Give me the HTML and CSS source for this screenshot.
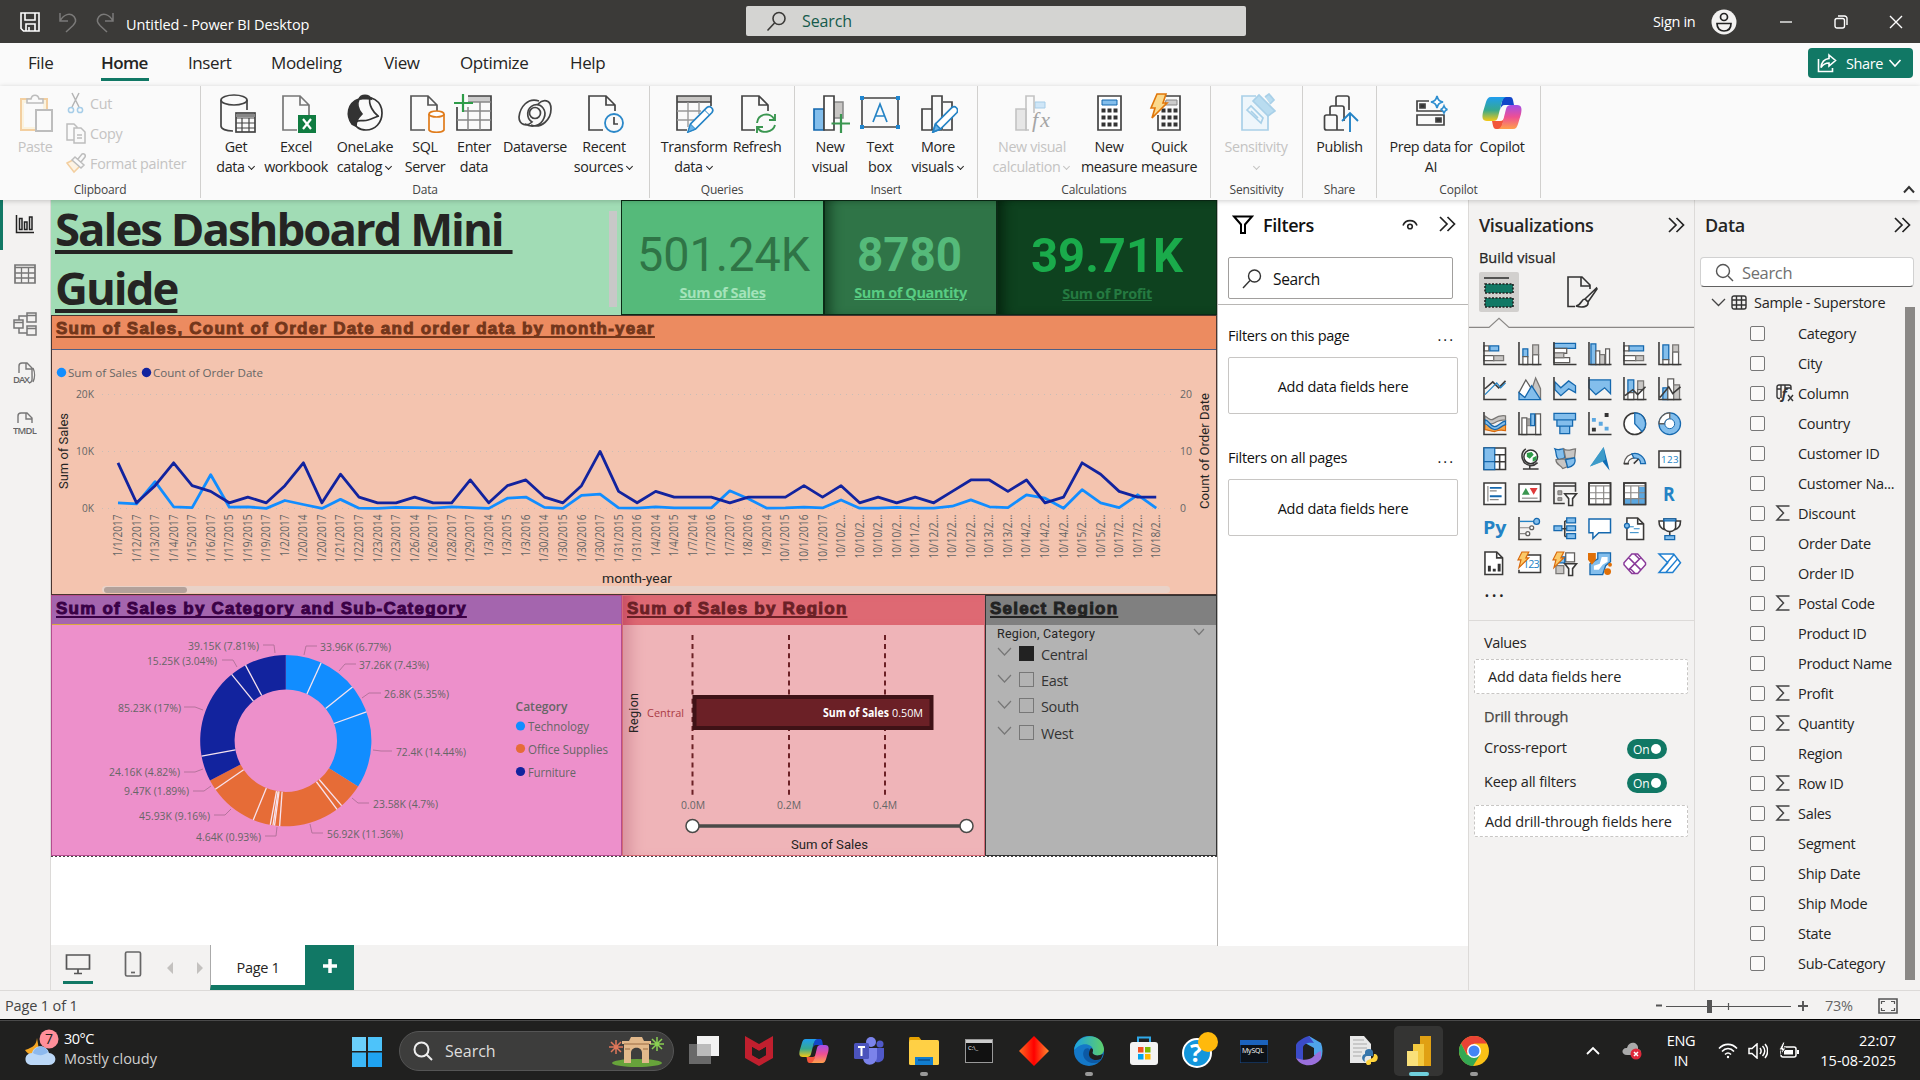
FILE: index.html
```html
<!DOCTYPE html>
<html lang="en">
<head>
<meta charset="utf-8">
<title>Untitled - Power BI Desktop</title>
<link rel="stylesheet" href="styles.css">
</head>
<body>
<div class="app">

<header class="titlebar">
  <div class="tb-left">
    <svg width="22" height="22" viewBox="0 0 22 22" fill="none" stroke="#fff" stroke-width="1.6"><path d="M2 2h18v18H4.500L2 17.500zM6 2v7h10V2M7 20v-7h9v7M10 20v-4"/></svg>
    <svg width="20" height="22" viewBox="0 0 20 22" fill="none" stroke="#7b7a79" stroke-width="1.500"><path d="M2 2v8h8M2 10C6 3 12 1.500 16 5.500c3 4 1.500 6-1 9L8 21"/></svg>
    <svg width="20" height="22" viewBox="0 0 20 22" fill="none" stroke="#7b7a79" stroke-width="1.500"><path d="M18 2v8h-8M18 10C14 3 8 1.500 4 5.500c-3 4-1.500 6 1 9L12 21"/></svg>
    <span class="tb-title">Untitled - Power BI Desktop</span>
  </div>
  <div class="tb-search">
    <svg width="21" height="21" viewBox="0 0 21 21" fill="none" stroke="#3b3a38" stroke-width="1.600"><circle cx="13" cy="7.500" r="6"/><path d="M8.500 12 1.500 19.500"/></svg>
    <span>Search</span>
  </div>
  <div class="tb-right">
    <span>Sign in</span>
    <svg class="avatar" width="26" height="26" viewBox="0 0 26 26"><circle cx="13" cy="13" r="12.500" fill="#f3f2f1"/><g fill="none" stroke="#222" stroke-width="1.700"><circle cx="13" cy="8" r="3.500"/><path d="M6 14.500h14c0 5-3 7.500-7 7.500s-7-2.500-7-7.500z"/></g></svg>
    <svg class="win" width="14" height="14" viewBox="0 0 14 14" stroke="#fff" stroke-width="1.300"><path d="M1 7h12"/></svg>
    <svg class="win" width="14" height="14" viewBox="0 0 14 14" fill="none" stroke="#fff" stroke-width="1.400"><rect x="1" y="3.500" width="9.500" height="9.500" rx="2"/><path d="M4 1h6.500a2.500 2.500 0 0 1 2.500 2.500V10"/></svg>
    <svg class="win" width="14" height="14" viewBox="0 0 14 14" stroke="#fff" stroke-width="1.400"><path d="M1 1l12 12M13 1 1 13"/></svg>
  </div>
</header>

<nav class="tabs">
  <span class="tab t-file">File</span><span class="tab t-home active">Home</span><span class="tab t-insert">Insert</span><span class="tab t-model">Modeling</span><span class="tab t-view">View</span><span class="tab t-opt">Optimize</span><span class="tab t-help">Help</span>
  <div class="share-btn">
    <svg width="20" height="20" viewBox="0 0 20 20" fill="none" stroke="#fff" stroke-width="1.600"><path d="M1.500 6v12.500h14V15"/><path d="M12 2l6.500 5.500L12 13V10c-4 0-6 1.500-8 4.500 .5-5 3-8.500 8-9z"/></svg>
    <span>Share</span>
    <svg width="14" height="10" viewBox="0 0 14 10" fill="none" stroke="#fff" stroke-width="1.600"><path d="M1.500 2 7 8l5.500-6"/></svg>
  </div>
</nav>

<section class="ribbon">
  <div class="group g-clip">
    <div class="group-body">
      <div class="rb w50 dim"><svg class="ric" viewBox="0 0 40 40" fill="none"><path d="M6 6h26v31H6z" fill="#fbf3df" stroke="#f3cfa0" stroke-width="2"/><path d="M9 10h19v24H9z" fill="#fafafa"/><path d="M12 10V6h4c1-5 7-5 8 0h4v4z" fill="#fafafa" stroke="#bdbdbd" stroke-width="1.600"/><path d="M21 17h16v21H21z" fill="#fafafa" stroke="#bdbdbd" stroke-width="2"/></svg><span>Paste</span></div>
      <div class="clip-list dim">
        <div><svg width="20" height="22" viewBox="0 0 20 22" fill="none" stroke="#b5b5b5" stroke-width="1.500"><path d="M6 1l7 14M13 1 6 15"/><circle cx="5" cy="18" r="2.600" stroke="#a6cde8"/><circle cx="14" cy="18" r="2.600" stroke="#a6cde8"/></svg><span>Cut</span></div>
        <div><svg width="20" height="22" viewBox="0 0 20 22" fill="#fafafa" stroke="#bdbdbd" stroke-width="1.500"><path d="M1 2h7l3 3v13H1z"/><path d="M8 6h7l4 4v11H8z"/><path d="M11 13h5M11 16h5"/></svg><span>Copy</span></div>
        <div><svg width="20" height="22" viewBox="0 0 20 22" fill="none" stroke-width="1.500"><path d="M1 11l8-4 6 6-7 7z" fill="#fdf3e4" stroke="#f3cfa0"/><path d="M6 8l3-3 9 8-3 3zM12 7l4-5c2-1 4 1 3 3l-4 5" fill="#fafafa" stroke="#bdbdbd"/></svg><span>Format painter</span></div>
      </div>
    </div>
    <div class="group-label">Clipboard</div>
  </div>

  <div class="group g-data">
    <div class="group-body">
      <div class="rb w56"><svg class="ric" viewBox="0 0 40 40" fill="none" stroke="#444" stroke-width="1.700"><ellipse cx="18" cy="7" rx="13" ry="5"/><path d="M5 7v26c0 3 5 5 12 5M31 7v10"/><rect x="20" y="20" width="19" height="19" fill="#fafafa"/><path d="M20 22.500h19" stroke="#888" stroke-width="3"/><path d="M20 25h19M20 30h19M20 35h19M26 25v14M33 25v14" stroke-width="1.200"/></svg><span>Get<br>data<i class="cv"></i></span></div>
      <div class="rb w64"><svg class="ric" viewBox="0 0 40 40" fill="none"><path d="M21 37H7V3h17l9 9v10M24 3v9h9" stroke="#777" stroke-width="1.700"/><rect x="22" y="22" width="18" height="18" fill="#107c41"/><path d="M27 26l8 10M35 26l-8 10" stroke="#fff" stroke-width="2.200"/></svg><span>Excel<br>workbook</span></div>
      <div class="rb w74"><svg class="ric" viewBox="0 0 40 40" fill="none" stroke="#333" stroke-width="1.700"><path d="M14 6c2-5 10-5 12 0-5-1-8 0-12 0zM14 6C2 10 1 23 7 31l4 2c0-7 4-10 6-12-5-6-5-11-3-15z" fill="#333"/><path d="M14 6c12-5 23 2 23 14 0 10-7 17-16 17-7 0-12-4-10-8 3-3 7 0 12-2 4-1 7-3 11-4M25 5c-2 7 4 15 8 18"/></svg><span>OneLake<br>catalog<i class="cv"></i></span></div>
      <div class="rb w46"><svg class="ric" viewBox="0 0 40 40" fill="none"><path d="M20 37H6V3h17l9 9v6M23 3v9h9" stroke="#555" stroke-width="1.700"/><path d="M24 21v16c2 3 13 3 15 0V21" fill="#fafafa" stroke="#e07b1a" stroke-width="1.700"/><ellipse cx="31.500" cy="21" rx="7.500" ry="3" fill="#fff" stroke="#e07b1a" stroke-width="1.700"/></svg><span>SQL<br>Server</span></div>
      <div class="rb w52"><svg class="ric" viewBox="0 0 40 40" fill="none"><path d="M14 3h23v6H14z" fill="#ccc"/><path d="M14 3h23v34H3V14" stroke="#444" stroke-width="1.700"/><path d="M14 9h23M10 18h27M3 27h34M14 14v23M26 9v28" stroke="#888" stroke-width="1.500"/><path d="M9 1v18M0 10h19" stroke="#2e9c48" stroke-width="2.200"/></svg><span>Enter<br>data</span></div>
      <div class="rb w70"><svg class="ric" viewBox="0 0 40 40" fill="none" stroke="#444" stroke-width="1.700"><path d="M24 8C13 4 5 14 4 24c0 8 8 10 13 5-6-4-6-14 2-17 8-2 13 6 10 13-3 8-12 10-19 6M16 32c11 4 20-6 20-16 0-10-8-10-13-5"/><circle cx="20" cy="20" r="5.500"/></svg><span>Dataverse</span></div>
      <div class="rb w68"><svg class="ric" viewBox="0 0 40 40" fill="none"><path d="M19 37H5V3h17l9 9v6M22 3v9h9" stroke="#444" stroke-width="1.700"/><circle cx="30" cy="30" r="9" fill="#fafafa" stroke="#2b88c9" stroke-width="1.800"/><path d="M30 24v7h4" stroke="#444" stroke-width="1.700"/></svg><span>Recent<br>sources<i class="cv"></i></span></div>
    </div>
    <div class="group-label">Data</div>
  </div>

  <div class="group g-query">
    <div class="group-body">
      <div class="rb w66"><svg class="ric" viewBox="0 0 40 40" fill="none"><path d="M3 3h34v6H3z" fill="#c8c6c4"/><path d="M13 37H3V3h34v10M3 9h34" stroke="#444" stroke-width="1.700"/><path d="M3 18h24M3 27h17M14 9v25M25 9v12" stroke="#999" stroke-width="1.400"/><path d="M14 39l2.500-8L33 14.500c3-2.500 7.500 1.500 5 5L21.500 36z" fill="#fff" stroke="#2483c5" stroke-width="1.700"/><path d="M14 39l2.500-8 5 5z" fill="#6cb4e8" stroke="#2483c5"/><path d="M30.500 17l5 5" stroke="#2483c5"/></svg><span>Transform<br>data<i class="cv"></i></span></div>
      <div class="rb w60"><svg class="ric" viewBox="0 0 40 40" fill="none"><path d="M18 37H5V3h17l9 9v6M22 3v9h9" stroke="#444" stroke-width="1.700"/><path d="M20 30c1-10 14-11 17-4M38 21v6h-6M38 32c-2 8-14 9-17 3M20 40v-6h6" stroke="#3a9650" stroke-width="1.900"/></svg><span>Refresh</span></div>
    </div>
    <div class="group-label">Queries</div>
  </div>

  <div class="group g-insert">
    <div class="group-body">
      <div class="rb w52"><svg class="ric" viewBox="0 0 40 40" fill="none"><path d="M22 9h11v16H22z" fill="#c8c6c4" stroke="#888" stroke-width="1.500"/><path d="M4 16h10v21H4z" fill="#83beec" stroke="#1568ae" stroke-width="1.700"/><path d="M14 3h10v34H14z" fill="#fff" stroke="#444" stroke-width="1.700"/><path d="M31 21v19M21.500 30.500H40" stroke="#3a9650" stroke-width="2.200"/></svg><span>New<br>visual</span></div>
      <div class="rb w48"><svg class="ric" viewBox="0 0 40 40" fill="none"><path d="M2 5h36v29H2z" stroke="#444" stroke-width="1.600"/><path d="M0 3h4v4H0zM36 3h4v4h-4zM0 32h4v4H0zM36 32h4v4h-4z" fill="#1f86d0"/><path d="M13 29l7-18 7 18M15.500 23h9" stroke="#2483c5" stroke-width="1.700"/></svg><span>Text<br>box</span></div>
      <div class="rb w68"><svg class="ric" viewBox="0 0 40 40" fill="none" stroke="#444" stroke-width="1.700"><path d="M25 9h9v28H25M4 16h10v21H4zM14 3h10v34H14z"/><path d="M15 39l2.500-8L34 14.500c3-2.500 7 1.500 5 5L22.500 36z" fill="#fff" stroke="#2483c5"/><path d="M15 39l2.500-8 5 5z" fill="#6cb4e8" stroke="#2483c5"/></svg><span>More<br>visuals<i class="cv"></i></span></div>
    </div>
    <div class="group-label">Insert</div>
  </div>

  <div class="group g-calc">
    <div class="group-body">
      <div class="rb w86 dim"><svg class="ric" viewBox="0 0 40 40" fill="none"><path d="M23 9h10v6H23z" fill="#cfe6f7" stroke="#a6cde8"/><path d="M4 16h10v21H4z" fill="#e6e6e6" stroke="#c3c3c3" stroke-width="1.600"/><path d="M22 20V3h-8v34h3" stroke="#c3c3c3" stroke-width="1.600"/><text class="fx" x="20" y="34" textLength="18">fx</text></svg><span>New visual<br>calculation<i class="cv"></i></span></div>
      <div class="rb w68"><svg class="ric" viewBox="0 0 40 40" fill="none"><path d="M9 3h23v34H9z" fill="#fff" stroke="#444" stroke-width="1.700"/><path d="M13 7h15v5H13z" fill="#83beec" stroke="#1568ae"/><path d="M12.500 17.500h16M12.500 24.500h16M12.500 31.500h16" stroke="#333" stroke-width="4" stroke-dasharray="4 2"/></svg><span>New<br>measure</span></div>
      <div class="rb w52"><svg class="ric" viewBox="0 0 40 40" fill="none"><path d="M17 3h14v34H9V22" stroke="#444" stroke-width="1.700"/><path d="M17 7h11v5H16z" fill="#ccc" stroke="#888"/><path d="M12.500 17.500h16M12.500 24.500h16M12.500 31.500h16" stroke="#333" stroke-width="4" stroke-dasharray="4 2"/><path d="M8 1h9l-3 9h4L3 25l3-10H2z" fill="#fbd98c" stroke="#e0760a" stroke-width="1.600"/></svg><span>Quick<br>measure</span></div>
    </div>
    <div class="group-label">Calculations</div>
  </div>

  <div class="group g-sens">
    <div class="group-body">
      <div class="rb w90 dim"><svg class="ric" viewBox="0 0 40 40" fill="none" stroke="#a9d0e8" stroke-width="1.700"><path d="M20 3H6v34h26V22" fill="#eef6fb"/><path d="M17 8l6-6 16 16-7 5zM29 4l4-3 5 6-4 4" fill="#b9dcf0"/><path d="M11 17l4-4 12 12-2 5zM15 18l7 7"/></svg><span>Sensitivity<br><i class="cv solo"></i></span></div>
    </div>
    <div class="group-label">Sensitivity</div>
  </div>

  <div class="group g-share">
    <div class="group-body">
      <div class="rb w74"><svg class="ric" viewBox="0 0 40 40" fill="none" stroke="#444" stroke-width="1.700"><path d="M24 37H6.500a2 2 0 0 1-2-2V24a2 2 0 0 1 2-2H15a2 2 0 0 1 2 2v13M10 22v-7a2 2 0 0 1 2-2h10a2 2 0 0 1 2 2v13M16 13V5a2 2 0 0 1 2-2h9a2 2 0 0 1 2 2v12"/><path d="M30 39V20M22 28l8-8 8 8" stroke="#2483c5" stroke-width="1.900"/></svg><span>Publish</span></div>
    </div>
    <div class="group-label">Share</div>
  </div>

  <div class="group g-cop">
    <div class="group-body">
      <div class="rb w90"><svg class="ric" viewBox="0 0 40 40" fill="none" stroke="#444" stroke-width="1.700"><path d="M18 8H6v10h27v-2M6 22h27v10H6z"/><path d="M9 11h5v4H9zM25 25h5v4h-5z" fill="#333"/><path d="M26 3c1 4 2 5 6 6-4 1-5 2-6 6-1-4-2-5-6-6 4-1 5-2 6-6zM33 13c.7 2 1.200 3 3.500 3.500-2.300.5-2.800 1.500-3.500 3.500-.7-2-1.200-3-3.500-3.500 2.300-.5 2.800-1.500 3.500-3.500z" stroke="#2f8fd0" fill="#fff"/></svg><span>Prep data for<br>AI</span></div>
      <div class="rb w52"><svg class="ric" viewBox="0 0 40 40"><use href="#copilot"/></svg><span>Copilot</span></div>
    </div>
    <div class="group-label">Copilot</div>
  </div>
  <svg class="collapse" width="12" height="9" viewBox="0 0 12 9" fill="none" stroke="#333" stroke-width="2"><path d="M1 7.500 6 2l5 5.500"/></svg>
</section>

<main class="work">
  <aside class="rail">
    <div class="rail-item on"><svg width="20" height="20" viewBox="0 0 20 20" fill="none" stroke="#222" stroke-width="1.500"><path d="M1.500 1v17.500H19"/><path d="M4.500 4.500h2.500v11H4.500zM9.500 8H12v7.500H9.500zM14.500 3H17v12.500h-2.500z"/></svg></div>
    <div class="rail-item"><svg width="22" height="22" viewBox="0 0 22 22" fill="none" stroke="#777" stroke-width="1.300"><path d="M1 2h20v18H1zM1 4.500h20" stroke-width="1.700"/><path d="M1 10h20M1 15h20M7.500 5v15M14.500 5v15"/></svg></div>
    <div class="rail-item"><svg width="24" height="24" viewBox="0 0 24 24" fill="none" stroke="#777" stroke-width="1.500"><path d="M1 8h9v8H1zM14 1h9v9h-9zM14 14h9v9h-9zM1 10.500h9M14 3.500h9M14 16.500h9M6 8V4h8M6 16v5h8"/></svg></div>
    <div class="rail-item"><svg width="24" height="24" viewBox="0 0 24 24" fill="none" stroke="#777" stroke-width="1.400"><path d="M6 11V4c0-2 1-3 3-3h5l5 5v5c0 6 1 9-3 10M13 1v6h6M20 6c2 4 2 10 0 14"/><text class="rt" x="0" y="21" textLength="17">DAX</text></svg></div>
    <div class="rail-item"><svg width="24" height="24" viewBox="0 0 24 24" fill="none" stroke="#777" stroke-width="1.400"><path d="M5 11V4c0-2 1-3 3-3h6l5 5v5M13 1v6h6"/><text class="rt" x="0" y="22" textLength="24">TMDL</text></svg></div>
  </aside>

  <section class="canvas">
    <div class="report">
      <div class="row1">
        <div class="v-title"><h1><u>Sales Dashboard Mini&nbsp;</u><br><u>Guide</u></h1><div class="vs"></div></div>
        <div class="kpi k1"><svg width="202" height="90"><text x="16" y="71" textLength="173" lengthAdjust="spacingAndGlyphs">501.24K</text></svg><u>Sum of Sales</u></div>
        <div class="kpi k2"><svg width="172" height="90"><text x="33" y="71" textLength="105" lengthAdjust="spacingAndGlyphs">8780</text></svg><u>Sum of Quantity</u></div>
        <div class="kpi k3"><svg width="220" height="91"><text x="34" y="72" textLength="152" lengthAdjust="spacingAndGlyphs">39.71K</text></svg><u>Sum of Profit</u></div>
      </div>
      <div class="v-line">
        <div class="vh"><u>Sum of Sales, Count of Order Date and order data by month-year</u></div>
        <svg id="line" width="1164" height="244" viewBox="52 350 1164 244"></svg>
      </div>
      <div class="row3">
        <div class="v-pie">
          <div class="vh"><u>Sum of Sales by Category and Sub-Category</u></div>
          <svg id="donut" width="569" height="229" viewBox="52 625 569 229"></svg>
        </div>
        <div class="v-region">
          <div class="vh"><u>Sum of Sales by Region</u></div>
          <svg width="361" height="230" viewBox="623 625 361 230">
            <g stroke="#6b2025" stroke-width="2" stroke-dasharray="5 4.100"><path d="M692.500 635v160M789 635v160M885 635v160"/></g>
            <rect x="694.500" y="697" width="237" height="31" fill="#6b2026" stroke="#3f1216" stroke-width="4"/>
            <text class="bl b7" x="823" y="716.500" textLength="66" lengthAdjust="spacingAndGlyphs">Sum of Sales</text>
            <text class="bl" x="892" y="716.500" textLength="31" lengthAdjust="spacingAndGlyphs">0.50M</text>
            <text class="ax cen" x="647" y="717" textLength="37" lengthAdjust="spacingAndGlyphs">Central</text>
            <text class="ax" x="681" y="809" textLength="24" lengthAdjust="spacingAndGlyphs">0.0M</text>
            <text class="ax" x="777" y="809" textLength="24" lengthAdjust="spacingAndGlyphs">0.2M</text>
            <text class="ax" x="873" y="809" textLength="24" lengthAdjust="spacingAndGlyphs">0.4M</text>
            <text class="at" x="791" y="849" textLength="77" lengthAdjust="spacingAndGlyphs">Sum of Sales</text>
            <text class="at" transform="translate(638 733) rotate(-90)" textLength="40">Region</text>
            <path d="M692 826h274" stroke="#4a4a48" stroke-width="3.500"/>
            <g fill="#fff" stroke="#4a4a48" stroke-width="1.500"><circle cx="692.500" cy="826" r="6.500"/><circle cx="966.500" cy="826" r="6.500"/></g>
          </svg>
        </div>
        <div class="v-slicer">
          <div class="vh"><u>Select Region</u></div>
          <div class="sl-head"><span>Region, Category</span><svg width="12" height="8" viewBox="0 0 12 8" class="ch"><path d="M1 1l5 5.500L11 1"/></svg></div>
          <div class="sl-row"><svg width="15" height="10" viewBox="0 0 15 10" class="ch"><path d="M1 1l6.500 7L14 1"/></svg><i class="sq full"></i><span>Central</span></div>
          <div class="sl-row"><svg width="15" height="10" viewBox="0 0 15 10" class="ch"><path d="M1 1l6.500 7L14 1"/></svg><i class="sq"></i><span>East</span></div>
          <div class="sl-row"><svg width="15" height="10" viewBox="0 0 15 10" class="ch"><path d="M1 1l6.500 7L14 1"/></svg><i class="sq"></i><span>South</span></div>
          <div class="sl-row"><svg width="15" height="10" viewBox="0 0 15 10" class="ch"><path d="M1 1l6.500 7L14 1"/></svg><i class="sq"></i><span>West</span></div>
        </div>
      </div>
    </div>
    <div class="blank"></div>
    <div class="pages">
      <div class="pg-mon"><svg width="26" height="22" viewBox="0 0 26 22" fill="none" stroke="#555" stroke-width="1.700"><path d="M1.500 2h23v14h-23zM13 16v4M9 20.500h8"/></svg></div>
      <svg class="pg-ph" width="18" height="26" viewBox="0 0 18 26" fill="none" stroke="#666" stroke-width="1.700"><rect x="1.500" y="1" width="15" height="24" rx="1.500"/><path d="M7 21.500h4"/></svg>
      <svg class="pg-ar" width="36" height="12" viewBox="0 0 36 12" fill="#c3c1bf"><path d="M6 0v12L0 6zM30 0v12l6-6z"/></svg>
      <div class="pg-tab">Page 1</div>
      <div class="pg-add"><svg width="14" height="14" viewBox="0 0 14 14" stroke="#fff" stroke-width="3.500"><path d="M7 0v14M0 7h14"/></svg></div>
    </div>
  </section>

  <aside class="filters">
    <div class="f-top">
      <div class="f-head">
        <svg width="22" height="20" viewBox="0 0 22 20" fill="none" stroke="#000" stroke-width="2"><path d="M2 1.500h18l-7 8V18H9V9.500z"/></svg>
        <h2>Filters</h2>
        <svg width="18" height="12" viewBox="0 0 18 12" fill="none" stroke="#222" stroke-width="1.600"><path d="M2 6.500c2.500-6.500 11.500-6.500 14 0"/><circle cx="9" cy="7.500" r="2.300"/></svg>
        <svg class="dbl" width="17" height="16" viewBox="0 0 17 16"><path d="M1 1l7 7-7 7M8.500 1l7 7-7 7"/></svg>
      </div>
      <div class="f-search"><svg width="20" height="20" viewBox="0 0 20 20" fill="none" stroke="#333" stroke-width="1.400"><circle cx="12.500" cy="7" r="6"/><path d="M8 11.500 1 19"/></svg><span>Search</span></div>
    </div>
    <div class="f-sec"><div class="f-lab"><span>Filters on this page</span><b>...</b></div><div class="f-box">Add data fields here</div></div>
    <div class="f-sec"><div class="f-lab"><span>Filters on all pages</span><b>...</b></div><div class="f-box">Add data fields here</div></div>
  </aside>

  <aside class="viz">
    <div class="p-head"><h2>Visualizations</h2><svg class="dbl" width="17" height="16" viewBox="0 0 17 16"><path d="M1 1l7 7-7 7M8.500 1l7 7-7 7"/></svg></div>
    <div class="bv">Build visual</div>
    <div class="modes">
      <div class="mode on"><svg width="32" height="32" viewBox="0 0 32 32"><path d="M1 2h25" stroke="#333" stroke-width="1.600"/><g fill="#117865" stroke="#222" stroke-width="1.600" stroke-dasharray="2 1.500"><path d="M2 8h28v9H2zM2 22h28v9H2z"/></g></svg></div>
      <div class="mode"><svg width="32" height="32" viewBox="0 0 32 32" fill="none" stroke="#333" stroke-width="1.600"><path d="M8 30.500H1V1h14l8 8v4M14 1v9h9"/><path d="M29.500 12L18 23l3 3 9-13zM18 23c-4 0-3 6-9 7 6 2 13 1 12-4z" fill="#f3f2f1"/></svg></div>
    </div>
    <svg class="caret" width="226" height="11" viewBox="0 0 226 11" fill="none" stroke="#8a8886" stroke-width="1.200"><path d="M0 10.400h20l10-9 10 9h186"/></svg>
    <div class="vgrid">
      <svg viewBox="0 0 24 24"><g class="w"><path d="M1 4h5v5H1zM1 14h10v5H1z"/></g><path class="b" d="M7 4h9v5H7z"/><path class="g" d="M11 14h10v5H11z"/><path class="k" d="M1 0v23h23"/></svg>
      <svg viewBox="0 0 24 24"><path class="b" d="M5 7h5v8H5z"/><path class="w" d="M5 15h5v8H5zM15 13h6v10h-6z"/><path class="g" d="M15 3h6v10h-6z"/><path class="k" d="M1 0v23h23"/></svg>
      <svg viewBox="0 0 24 24"><path class="b" d="M1 1.500h22v5H1z"/><path class="w" d="M1 6.500h13v5H1zM1 16h16v5H1z"/><path class="g" d="M1 11h10v5H1z"/><path class="k" d="M1 0v23h23"/></svg>
      <svg viewBox="0 0 24 24"><path class="b" d="M3 2h5v21H3z"/><path class="w" d="M8 9h4v14H8zM18 7h4v16h-4z"/><path class="g" d="M12 13h5v10h-5z"/><path class="k" d="M1 0v23h23"/></svg>
      <svg viewBox="0 0 24 24"><path class="b" d="M6 4h15v5H6z"/><path class="w" d="M1 4h5v5H1zM1 14h12v5H1z"/><path class="g" d="M13 14h8v5h-8z"/><path class="k" d="M1 0v23h23"/></svg>
      <svg viewBox="0 0 24 24"><path class="b" d="M5 3h6v15H5z"/><path class="w" d="M5 18h6v5H5zM15 10h6v13h-6z"/><path class="g" d="M15 3h6v7h-6z"/><path class="k" d="M1 0v23h23"/></svg>

      <svg viewBox="0 0 24 24"><path class="k" d="M1 0v23h23M2 12l8-7 6 6 7-7"/><path d="M2 18l12-12 4 5 5-5" fill="none" stroke="#2483c5" stroke-width="1.300"/></svg>
      <svg viewBox="0 0 24 24"><path class="g" d="M11 22l7-21 5 11v10z"/><path class="w" d="M1 16L8 3l7 11-8 8z"/><path class="b" d="M1 16l6 5 7-12 9 14H1z"/></svg>
      <svg viewBox="0 0 24 24"><path class="b" d="M2 5l6 6 8-7 7 5v7l-7-4-8 7-6-6z"/><path class="k" d="M1 0v23h23"/></svg>
      <svg viewBox="0 0 24 24"><path class="b" d="M1 3h22v14l-6-6-9 7-7-7z"/><path class="k" d="M1 0v23h23"/></svg>
      <svg viewBox="0 0 24 24"><path class="b" d="M5 3h6v13H5z"/><path class="g" d="M15 4h6v9h-6z"/><path class="w" d="M5 16h6v7H5zM15 13h6v10h-6z"/><path class="k" d="M1 0v23h23M2 19l8-6 5 5 8-8"/></svg>
      <svg viewBox="0 0 24 24"><path class="b" d="M5 11h5v12H5z"/><path class="w" d="M10 2h6v21h-6z"/><path class="g" d="M16 8h6v15h-6z"/><path class="k" d="M1 0v23h23M2 21l9-11 4 7 8-7"/></svg>

      <svg viewBox="0 0 24 24"><path class="g" d="M2 4c4 3 6 5 9 3s6-4 12-3v4c-5 0-8 1-11 3s-7 1-10-3z"/><path class="o" d="M2 12c3-1 5 0 9 4s8-2 12-3v6c-4-1-7-1-11 1-4 0-7-2-10-2z"/><path class="b" d="M2 8c4 0 5 7 10 7 4 0 6-5 11-6v4c-5 1-6 5-11 5-5 0-6-5-10-6z"/><path class="k" d="M1 0v23h23"/></svg>
      <svg viewBox="0 0 24 24"><path class="w" d="M4 6h5v17H4zM18 2h5v21h-5z"/><path class="gd" d="M9 7h4v7H9z"/><path class="b" d="M13 2h4v12h-4z"/><path class="k" d="M1 0v23h23"/></svg>
      <svg viewBox="0 0 24 24"><path class="b" d="M1 1.500h22V8H1zM4 8h16v6.500H4zM7 14.500h10V22H7z"/></svg>
      <svg viewBox="0 0 24 24"><path d="M17 1h4v4h-4zM4 16h4v4H4z" fill="#333"/><path d="M4 6h4v4H4zM11 10h4v4h-4zM17 15h4v4h-4z" fill="#5ba7e0"/><path class="k" d="M1 0v23h23"/></svg>
      <svg viewBox="0 0 24 24"><circle class="w2" cx="12" cy="12" r="11"/><path class="b" d="M12 1a11 11 0 0 1 7.500 19L12 12z"/></svg>
      <svg viewBox="0 0 24 24"><circle class="b" cx="12" cy="12" r="11"/><path class="w" d="M1 12A11 11 0 0 1 12 1v6a5 5 0 0 0-5 5z"/><circle cx="12" cy="12" r="5" fill="#fff" stroke="#1568ae"/></svg>

      <svg viewBox="0 0 24 24"><path class="w2" d="M1 1h22v22H1z"/><path class="b" d="M1 1h11v14H1zM1 15h11v8H1z"/><path class="k" d="M12 8h11M17 8v15M12 15h11"/></svg>
      <svg viewBox="0 0 24 24"><circle cx="13" cy="10" r="7" fill="#fff" stroke="#333" stroke-width="1.500"/><path d="M9 6l5-1 2 3-4 4-3-2zM15 11l4-2v4l-4 2z" fill="#2e9c48"/><path class="k" d="M8 2C1 7 4 18 13 19c3 0 5-1 7-3M12 19v3M5 22.500h16"/></svg>
      <svg viewBox="0 0 24 24"><path class="b" d="M2 2c5 2 7-1 9 0l1 9-6 2C2 10 4 6 2 2z"/><path class="gs" d="M11 2c4 3 8 0 12 0l-1 9-9 1zM3 13l9-1 3 8-5 2C7 18 3 18 3 13z"/><path class="b" d="M13 13l9-2c2 6-2 9-7 10z"/></svg>
      <svg viewBox="0 0 24 24"><path d="M16 0L2 20l13-5z" fill="#48a3cf"/><path d="M16 0l6 24-7-9z" fill="#0d6cb5"/><path d="M16 0l2 13-16 7z" fill="#3d9bc9"/></svg>
      <svg viewBox="0 0 24 24"><path class="w" d="M1 17C2 11 6 7 12 7v4c-4 0-7 3-7 6z"/><path class="b" d="M9 7c7-2 13 3 14 10h-5c0-4-3-6-7-6z"/><path class="k" d="M11 17l5-5M1 17h5"/></svg>
      <svg viewBox="0 0 24 24"><path class="w2" d="M1 4h22v17H1z"/><text x="3" y="16.500" font-size="10" textLength="18" fill="#2483c5">123</text></svg>

      <svg viewBox="0 0 24 24"><path class="w2" d="M1 1h22v22H1z"/><path class="kg" d="M5 4v16M7 9h7M7 18h9"/><path d="M7 6h12M7 14.500h12" stroke="#1568ae" stroke-width="2"/></svg>
      <svg viewBox="0 0 24 24"><path class="w2" d="M1 2h22v18H1z"/><path d="M4 13l4-7 4 7z" fill="#3a9650"/><path d="M12 6h8l-4 7z" fill="#e03a3a"/><path class="kg" d="M4 16.500h16"/></svg>
      <svg viewBox="0 0 24 24"><path class="k" d="M12 22H1V1h22v9M1 4h22"/><path class="gd" d="M5 9h4v4H5zM5 16h4v3H5z"/><path class="w2" d="M12 12h12l-4 5v7h-4v-7z"/></svg>
      <svg viewBox="0 0 24 24"><path class="w2" d="M1 1h22v22H1z"/><path class="kg" d="M1 4h22M1 11h22M1 17h22M8 4v19M16 4v19"/><path class="k" d="M1 1h22v22H1z"/></svg>
      <svg viewBox="0 0 24 24"><path class="w2" d="M1 1h22v22H1z"/><path d="M16 5h7v18H2v-6h14z" fill="#5ba7e0"/><path class="kg" d="M1 4h22M1 11h22M1 17h22M8 4v19M16 4v19"/><path class="k" d="M1 1h22v22H1z"/></svg>
      <svg viewBox="0 0 24 24"><text x="5" y="19" font-size="20" font-weight="700" textLength="12" lengthAdjust="spacingAndGlyphs" fill="#2483c5">R</text></svg>

      <svg viewBox="0 0 24 24"><text x="0" y="17" font-size="19" font-weight="700" textLength="24" lengthAdjust="spacingAndGlyphs" fill="#2483c5">Py</text></svg>
      <svg viewBox="0 0 24 24"><path class="k" d="M1 0v23h23"/><path class="kg" d="M2 11h10M2 17h6"/><circle cx="14" cy="11" r="2" class="w"/><circle cx="10" cy="17" r="2" class="w"/><path d="M2 4.500h14" stroke="#2483c5" stroke-width="1.400"/><circle cx="19" cy="4.500" r="3" class="b"/></svg>
      <svg viewBox="0 0 24 24"><path class="k" d="M8 12h6M12 4v16M12 4h4M12 20h4"/><path class="b" d="M1 9h8v5H1zM14 1h9v5h-9zM14 9h9v5h-9zM14 17h9v5h-9z"/></svg>
      <svg viewBox="0 0 24 24"><path d="M1 2h22v14H11l-6 6v-6H1z" fill="#fff" stroke="#1568ae" stroke-width="1.500"/></svg>
      <svg viewBox="0 0 24 24"><path class="w2" d="M4 1h11l6 6v16H4z"/><path class="k" d="M15 1v6h6"/><path d="M6 10h5M11 12h6M7 16h9" stroke="#2483c5"/><circle cx="4" cy="9" r="2.500" class="b"/></svg>
      <svg viewBox="0 0 24 24"><path class="w2" d="M6 2h12v9c-2 5-10 5-12 0zM6 4H1c0 5 2 8 6 9M18 4h5c0 5-2 8-6 9"/><path class="k" d="M12 15v5"/><path class="b" d="M6 2h12v2H6zM7 19h10v4H7z"/></svg>

      <svg viewBox="0 0 24 24"><path class="w2" d="M2 0h12l6 6v17H2z"/><path class="k" d="M14 0v6h6"/><path d="M5 14h3v6H5zM10 17h3v3h-3zM15 12h3v8h-3z" fill="#333"/></svg>
      <svg viewBox="0 0 24 24"><path class="w2" d="M5 3h18v18H1v-3"/><text x="5" y="16.500" font-size="11" textLength="17" fill="#2483c5">123</text><path class="bolt" d="M4 0h7L8 6h3L1 16l2-8H0z"/></svg>
      <svg viewBox="0 0 24 24"><path class="gs" d="M3 14h8v8H3z"/><path class="w" d="M13 1h9v9h-9z"/><path class="b" d="M6 5h6v6H6z"/><path class="w2" d="M12 12h12l-4 5v7h-4v-7z"/><path class="bolt" d="M4 0h7L8 6h3L1 16l2-8H0z"/></svg>
      <svg viewBox="0 0 24 24"><path class="b" d="M2 12v11h13l3-9 5-4V1H10v6z"/><path d="M14 5h6v5l-5 3-4 5H6v-4l6-2z" fill="#fff"/><path d="M0 1h8v7l-4 5-4-5z" fill="#df6f07"/><circle cx="20" cy="20" r="3.500" fill="#df6f07"/><circle cx="22.500" cy="13" r="2" fill="#df6f07"/></svg>
      <svg viewBox="0 0 24 24"><path d="M9 2h6l8 9v2l-8 9H9l-8-9v-2zM6 6l12 12M18 6L6 18M12 2.500l5 5M12 21.500l-5-5" fill="#fff" stroke="#8a3a9a" stroke-width="1.500"/></svg>
      <svg viewBox="0 0 24 24"><path d="M1 2h15l7 9-8 10H1l9-10zM1 21L16 3M8 21l12-14" fill="#fff" stroke="#1f7fd0" stroke-width="1.500"/></svg>
    </div>
    <div class="vdots">...</div>
    <div class="wells">
      <div class="w-lab">Values</div>
      <div class="well">Add data fields here</div>
      <div class="w-dt">Drill through</div>
      <div class="w-row"><span>Cross-report</span><div class="tog">On<i></i></div></div>
      <div class="w-row"><span>Keep all filters</span><div class="tog">On<i></i></div></div>
      <div class="well w2l">Add drill-through fields here</div>
    </div>
  </aside>

  <aside class="data">
    <div class="p-head"><h2>Data</h2><svg class="dbl" width="17" height="16" viewBox="0 0 17 16"><path d="M1 1l7 7-7 7M8.500 1l7 7-7 7"/></svg></div>
    <div class="d-search"><svg width="19" height="19" viewBox="0 0 19 19" fill="none" stroke="#555" stroke-width="1.400"><circle cx="8" cy="8" r="6.500"/><path d="M13 13l5 5"/></svg><span>Search</span></div>
    <div class="d-body">
      <div class="tree">
        <div class="d-table"><svg width="15" height="9" viewBox="0 0 15 9" fill="none" stroke="#444" stroke-width="1.300"><path d="M1 1l6.500 6.500L14 1"/></svg><svg width="16" height="15" viewBox="0 0 16 15" fill="none" stroke="#333" stroke-width="1.400"><rect x="1" y="1" width="14" height="13" rx="2"/><path d="M1 5h14M1 10h14M5.500 1v13M10.500 1v13"/></svg><span>Sample - Superstore</span></div>
        <div id="fields"></div>
      </div>
      <div class="d-scroll"></div>
    </div>
  </aside>
</main>

<footer class="status">
  <span class="st-page">Page 1 of 1</span>
  <div class="zoom">
    <svg width="150" height="16" viewBox="0 0 150 16" stroke="#555" fill="none"><path d="M0 7.500h6" stroke-width="2"/><path d="M10 8.500h125" stroke-width="1.200"/><path d="M53.500 2v13" stroke-width="5"/><path d="M72.500 5v7" stroke-width="1.200"/><path d="M147 3v10M142 8h10" stroke-width="1.900"/></svg>
    <span>73%</span>
    <svg width="20" height="16" viewBox="0 0 20 16" fill="none" stroke="#555" stroke-width="1.600"><path d="M1 1h18v14H1z"/><path d="M3.500 6V3.500H7M13 3.500h3.500V6M16.500 10v2.500H13M7 12.500H3.500V10" stroke-width="1.200"/></svg>
  </div>
</footer>

<footer class="taskbar">
  <div class="weather">
    <svg width="38" height="40" viewBox="0 0 38 40"><path d="M12 9c-1 7-3 9-12 12 4 7 12 5 14 0z" fill="#f5a623"/><path d="M6 36c-8-1-7-12 1-12 2-9 15-9 17 0 9 1 8 12 0 12z" fill="#bcd8f7"/><path d="M8 24c2-8 13-8 15-1-4 4-10 4-15 1z" fill="#8db9ee"/><circle cx="24" cy="10" r="9.500" fill="#ff8f9a"/><text x="20" y="15" font-size="14" fill="#222">7</text></svg>
    <div><span>30°C</span><span class="wd">Mostly cloudy</span></div>
  </div>
  <svg class="start" width="30" height="30" viewBox="0 0 30 30" fill="#35b4f5"><path d="M0 0h14v14H0z" fill="#6bd0fb"/><path d="M16 0h14v14H16z" fill="#4dc3fa"/><path d="M0 15.500h14V30H0z" fill="#3cb8f8"/><path d="M16 15.500h14V30H16z" fill="#1fa3f2"/></svg>
  <div class="t-search">
    <svg width="20" height="20" viewBox="0 0 20 20" fill="none" stroke="#eee" stroke-width="2"><circle cx="8.500" cy="8.500" r="7"/><path d="M13.500 13.500L19 19"/></svg>
    <span>Search</span>
    <svg class="gate" width="56" height="32" viewBox="0 0 56 32"><ellipse cx="28" cy="28" rx="25" ry="4" fill="#67a33a"/><g stroke="#e0775a" stroke-width="1.500"><path d="M7 5v14M0 12h14M2 7l10 10M12 7L2 17"/></g><g stroke="#8bcf52" stroke-width="1.500"><path d="M48 2v14M41 9h14M43 4l10 10M53 4L43 14"/></g><path d="M15 28V9h-2V6h7l2-4h11l2 4h7v3h-2v19h-7V18c0-7-11-7-11 0v10z" fill="#e2b98b"/><path d="M15 9h25M16 14h5M34 14h5" stroke="#9a6b42"/></svg>
  </div>
  <div class="apps">
    <div><svg width="30" height="30" viewBox="0 0 30 30"><path d="M8 0h22v20H8z" fill="#f2f2f2"/><path d="M0 8h22v20H0z" fill="#777" opacity=".85"/><path d="M8 8h14v12H8z" fill="#bbb"/></svg></div>
    <div><svg width="28" height="30" viewBox="0 0 28 30"><path d="M0 0l14 8L28 0v22l-14 8L0 22zM7 11v8l7 4 7-4v-8l-7 4z" fill="#c01f2e" fill-rule="evenodd"/><path d="M7 11l7 4 7-4v8l-7 4-7-4z" fill="#20201f"/></svg></div>
    <div><svg width="30" height="30" viewBox="0 0 40 40"><use href="#copilot"/></svg></div>
    <div><svg width="30" height="28" viewBox="0 0 30 28"><circle cx="17" cy="5" r="5" fill="#7b83eb"/><circle cx="26" cy="7" r="3.500" fill="#5059c9"/><path d="M21 11h9v8c0 5-4 7-8 6z" fill="#5059c9"/><path d="M9 11h14v9c0 9-13 11-14 1z" fill="#7b83eb"/><rect y="6" width="15" height="16" rx="1.500" fill="#4b53bc"/><path d="M4 10h7M7.500 10v9" stroke="#fff" stroke-width="2"/></svg></div>
    <div class="run"><svg width="30" height="28" viewBox="0 0 30 28"><path d="M0 2c0-2 1-2 2-2h8l3 4H0z" fill="#e5a100"/><rect y="3" width="30" height="25" rx="1.500" fill="#ffd045"/><path d="M6 20h18v8H6z" fill="#117dcf"/><path d="M9 23h12" stroke="#0a4f8c" stroke-width="1.500"/></svg></div>
    <div><svg width="28" height="24" viewBox="0 0 28 24"><rect x=".5" y=".5" width="27" height="23" fill="#111" stroke="#999"/><path d="M1 2.500h26" stroke="#ccc" stroke-width="3"/><text x="3" y="11" font-size="6" fill="#fff">C:\_</text></svg></div>
    <div><svg width="30" height="30" viewBox="0 0 30 30"><defs><linearGradient id="rd"><stop offset="0" stop-color="#ff6a20"/><stop offset=".5" stop-color="#f00"/><stop offset="1" stop-color="#ff8a30"/></linearGradient></defs><path d="M15 0l15 15-15 15L0 15z" fill="url(#rd)"/></svg></div>
    <div class="run"><svg width="30" height="30" viewBox="0 0 30 30"><defs><linearGradient id="eg"><stop offset="0" stop-color="#1ba1e2"/><stop offset="1" stop-color="#5fd06a"/></linearGradient></defs><circle cx="15" cy="15" r="15" fill="#1478c8"/><path d="M0 14C2-3 28-5 30 13c0 5-5 8-10 6-3-1-1-2-1-5 0-5-8-8-14-4-3 2-4 3-5 4z" fill="url(#eg)"/><path d="M11 13c-5 6 1 15 10 14 3 0 5-2 7-4-6 3-14 0-13-6 0-2 1-3 1-3-1-2-3-2-5-1z" fill="#0c59a4"/><path d="M17 12c3 1 2 3 1.500 5C20 20 25 20 29 18l-2 5c-7 3-13-1-12-6 0-2 1-3 2-5z" fill="#20201f"/></svg></div>
    <div><svg width="28" height="30" viewBox="0 0 28 30"><path d="M8 7V1.500h12V7" fill="none" stroke="#2fa8e8" stroke-width="2"/><rect y="6" width="28" height="23" rx="3" fill="#f3f3f3"/><path d="M8 11h5.500v5.500H8z" fill="#f25022"/><path d="M15 11h5.500v5.500H15z" fill="#7fba00"/><path d="M8 18h5.500v5.500H8z" fill="#00a4ef"/><path d="M15 18h5.500v5.500H15z" fill="#ffb900"/></svg></div>
    <div><svg width="38" height="38" viewBox="0 0 38 38"><circle cx="17" cy="21" r="14" fill="#1296dc" stroke="#fff" stroke-width="2"/><text x="10" y="30" font-size="25" font-weight="700" fill="#fff">?</text><circle cx="28" cy="10" r="10" fill="#ffb90c"/></svg></div>
    <div><svg width="28" height="23" viewBox="0 0 28 23"><rect width="28" height="23" rx="1" fill="#0d1218" stroke="#1d4f91"/><path d="M0 2.500h28" stroke="#1b63bd" stroke-width="5"/><text x="2" y="13" font-size="7" textLength="22" fill="#fff">MySQL</text></svg></div>
    <div><svg width="30" height="30" viewBox="0 0 30 30"><path d="M15 0l12 7c2 5 2 11 0 16l-7-4v-7l-9-5z" fill="#4fa4ea"/><path d="M15 0C8 2 3 6 2 9v13l7 3V12c0-4 5-6 11-5z" fill="#3b4bc8"/><path d="M2 22c5 9 18 10 25 1v-8c-4 1-6 4-8 6-4 3-9 4-17 1z" fill="#9a70dc"/></svg></div>
    <div><svg width="28" height="30" viewBox="0 0 28 30"><path d="M0 0h14l7 8v19H0z" fill="#e8e8e8"/><path d="M3 4h11M3 8h14M3 12h14M3 16h9M3 20h8" stroke="#aaa"/><path d="M15 16c0-4 8-4 8 0v4h-6c-3 0-3 6-1 6-5-1-5-7-1-8z" fill="#3776ab"/><path d="M24 18c5-1 5 8 0 8h-3v2c-2 2-5 1-5-1 0-5 8-2 8-9z" fill="#ffd43b"/></svg></div>
    <div class="pbi"><svg width="24" height="30" viewBox="0 0 24 30"><path d="M13 0h11v30H13z" fill="#e0a013"/><path d="M6 8h11v22H6z" fill="#f3c93f"/><path d="M0 15h11v15H0z" fill="#f9e07a"/></svg></div>
    <div class="run"><svg width="30" height="30" viewBox="0 0 30 30"><circle cx="15" cy="15" r="15" fill="#fbc116"/><path d="M2 7.500A15 15 0 0 1 28 7.500H15l-7 11z" fill="#ea4335"/><path d="M2 7.500A15 15 0 0 0 14 30l7-11h-13z" fill="#34a853"/><circle cx="15" cy="15" r="7" fill="#fff"/><circle cx="15" cy="15" r="5.500" fill="#4285f4"/></svg></div>
  </div>
  <div class="tray">
    <svg width="14" height="9" viewBox="0 0 14 9" fill="none" stroke="#fff" stroke-width="1.800"><path d="M1 8l6-6 6 6"/></svg>
    <svg class="cl" width="20" height="18" viewBox="0 0 20 18"><path d="M5 13C-2 13 0 5 5 6c2-8 12-6 11 1 4 1 4 6 0 6z" fill="#aaa"/><circle cx="14" cy="12" r="5.500" fill="#e0283a"/><path d="M12 10l4 4M16 10l-4 4" stroke="#fff" stroke-width="1.500"/></svg>
    <div class="lang"><span>ENG</span><span>IN</span></div>
    <svg class="wf" width="20" height="16" viewBox="0 0 20 16" fill="none" stroke="#fff" stroke-width="1.600"><path d="M1 5.500c5-5.500 13-5.500 18 0M4 8.500c3.500-4 8.500-4 12 0M7 11.500c2-2 4-2 6 0"/><circle cx="10" cy="14" r="1.200" fill="#fff" stroke="none"/></svg>
    <svg class="vo" width="20" height="16" viewBox="0 0 20 16" fill="none" stroke="#fff" stroke-width="1.500"><path d="M1 5.500h3L9 1v14l-5-4.500H1zM12 5c1.500 2 1.500 4 0 6M14.500 3c3 3 3 7 0 10M17 1c3.500 4 3.500 10 0 14"/></svg>
    <svg class="ba" width="22" height="18" viewBox="0 0 22 18" fill="none"><rect x="3" y="5" width="15" height="10" rx="2" stroke="#fff" stroke-width="1.500"/><path d="M6 8h9v4.500H6z" fill="#fff"/><path d="M20 8v4" stroke="#fff" stroke-width="2"/><path d="M5 0L1 8h3l-1 5 5-7H5l2-6z" fill="#fff" stroke="#20201f"/></svg>
    <div class="clock"><span>22:07</span><span>15-08-2025</span></div>
  </div>
</footer>
</div>

<svg class="defs" width="0" height="0"><defs>
  <linearGradient id="c1" x1="0" y1="0" x2="0" y2="1"><stop offset="0" stop-color="#1f9df0"/><stop offset=".55" stop-color="#37a98e"/><stop offset="1" stop-color="#f6c915"/></linearGradient>
  <linearGradient id="c2" x1="0" y1="0" x2="0" y2="1"><stop offset="0" stop-color="#a34fe8"/><stop offset=".5" stop-color="#ee4f93"/><stop offset="1" stop-color="#ffa04a"/></linearGradient>
  <symbol id="copilot" viewBox="0 0 40 40"><path d="M21 4h7c3 0 3 3 4 8h-9c-3 0-4 2-5 5z" fill="#1246c9"/><path d="M19 36h-5c-3 0-3-4-4-8h8c3 0 4-2 5-5z" fill="#f2553a"/><path d="M9 4h15c-3 1-4 4-5 8l-3 12c-1 3-2 4-5 4H5c-5 0-5-4-4-9l3-10c1-3 2-5 5-5z" fill="url(#c1)"/><path d="M31 36H16c3-1 4-4 5-8l3-12c1-3 2-4 5-4h6c5 0 5 4 4 9l-3 10c-1 3-2 5-5 5z" fill="url(#c2)"/></symbol>
</defs></svg>
<script src="app.js"></script>
</body>
</html>
```

FILE: styles.css
```css
* { box-sizing: border-box; }
body { margin: 0; font-family: "Open Sans", "Noto Sans", sans-serif; font-size: 14.5px; letter-spacing: -0.35px; color: #252423; overflow: hidden; }
h1, h2 { margin: 0; }
svg { display: block; flex: none; }
svg text { font-family: "Open Sans", sans-serif; letter-spacing: 0; stroke: none; }
.defs { position: absolute; }
.app { width: 1920px; height: 1080px; display: flex; flex-direction: column; background: #f3f2f1; }

/* title bar */
.titlebar { height: 43px; flex: none; background: #3b3a38; color: #fff; display: grid; grid-template-columns: 746px 500px 1fr; }
.tb-left { display: flex; align-items: center; padding-left: 19px; gap: 17px; }
.tb-title { margin: 5px 0 0 -6px; font-size: 14.5px; letter-spacing: -0.1px; }
.tb-search { height: 30px; margin-top: 6px; background: #d4d4d2; border-radius: 2px; color: #155a4b; display: flex; align-items: center; padding-left: 20px; gap: 15px; font-size: 16px; letter-spacing: -.1px; }
.tb-right { display: flex; align-items: center; padding-left: 407px; white-space: nowrap; }
.tb-right span { width: 46px; }
.avatar { margin: 0 42px 0 12px; }
.win { margin-right: 41px; }

/* ribbon tabs */
.tabs { height: 43px; flex: none; background: #fafafa; display: flex; font-size: 17px; letter-spacing: -0.4px; position: relative; z-index: 2; }
.tab { padding-top: 8px; height: 38px; white-space: nowrap; }
.t-file { margin-left: 28px; width: 73px; }
.t-home { width: 48px; margin-right: 39px; }
.t-insert { width: 83px; }
.t-model { width: 113px; }
.t-view { width: 76px; }
.t-opt { width: 110px; }
.t-help { width: 60px; }
.tab.active { font-weight: 600; border-bottom: 3px solid #117865; letter-spacing: -0.6px; }
.share-btn { margin: 5px 7px 0 auto; width: 105px; height: 30px; background: #117865; border-radius: 4px; color: #fff; display: flex; align-items: center; padding-left: 9px; gap: 9px; font-size: 14.5px; }
.share-btn svg:last-child { margin-left: -4px; }

/* ribbon */
.ribbon { height: 114px; flex: none; background: #fafafa; display: flex; position: relative; z-index: 2; box-shadow: 0 1px 5px rgba(0,0,0,.2); }
.group { display: flex; flex-direction: column; border-right: 1px solid #d1d0ce; height: 112px; padding-top: 7px; }
.group-body { display: flex; height: 90px; }
.group-label { text-align: center; font-size: 12px; line-height: 16px; color: #444; letter-spacing: -0.2px; }
.g-clip { width: 201px; } .g-clip .group-body { padding-left: 10px; }
.g-data { width: 449px; } .g-data .group-body { padding-left: 7px; }
.g-query { width: 145px; } .g-query .group-body { padding-left: 11px; }
.g-insert { width: 183px; } .g-insert .group-body { padding-left: 9px; }
.g-calc { width: 233px; } .g-calc .group-body { padding-left: 11px; }
.g-sens { width: 92px; }
.g-share { width: 74px; }
.g-cop { width: 164px; } .g-cop .group-body { padding-left: 9px; }
.rb { display: flex; flex-direction: column; align-items: center; line-height: 20px; white-space: nowrap; text-align: center; font-size: 14.3px; letter-spacing: -0.35px; }
.rb > span { margin-top: 4px; flex: none; }
.ric { width: 40px; height: 40px; }
.w46 { width: 46px; } .w48 { width: 48px; } .w50 { width: 50px; } .w52 { width: 52px; } .w56 { width: 56px; } .w60 { width: 60px; } .w64 { width: 64px; } .w66 { width: 66px; } .w68 { width: 68px; } .w70 { width: 70px; } .w74 { width: 74px; } .w86 { width: 86px; } .w90 { width: 90px; }
.dim { color: #c4c3c2; }
.ric .fx { font-family: "Liberation Serif", serif; font-style: italic; font-size: 22px; fill: #a5a5a5; }
.cv { display: inline-block; width: 5px; height: 5px; border: solid currentColor; border-width: 0 1.7px 1.7px 0; transform: rotate(45deg); margin: 0 2px 3px 4px; }
.cv.solo { margin-left: 2px; }
.clip-list { display: flex; flex-direction: column; padding-left: 6px; font-size: 14.3px; margin-top: -5px; letter-spacing: -.25px; }
.clip-list div { display: flex; height: 30px; align-items: center; gap: 4px; white-space: nowrap; }
.collapse { margin: 99px 5px 0 auto; }

/* work area */
.work { flex: 1; display: flex; min-height: 0; }
.rail { width: 51px; flex: none; border-right: 1px solid #dcdad8; display: flex; flex-direction: column; }
.rail-item { height: 50px; display: flex; align-items: center; justify-content: center; padding-bottom: 2px; }
.rail-item.on { border-left: 3px solid #117865; padding-right: 4px; }
.rt { font-size: 9.500px; font-weight: 600; fill: #666; }
.canvas { width: 1166px; flex: none; display: flex; flex-direction: column; background: #fff; }
.report { height: 657px; border-bottom: 2px dotted #444; }
.row1 { height: 115px; display: flex; }
.v-title { width: 570px; background: #a1dcb5; display: flex; justify-content: space-between; padding-left: 4px; }
.v-title h1 { font-size: 45.5px; line-height: 59px; letter-spacing: -2px; white-space: nowrap; color: #252423; height: 115px; margin-top: -1px; }
.v-title u { text-decoration-thickness: 4px; text-underline-offset: 4px; text-decoration-skip-ink: none; }
.vs { width: 8px; height: 96px; margin: 11px 4px 0 0; background: #c8c8c8; }
.kpi { border: 1px solid #0b2a16; text-align: center; height: 115px; font-weight: 700; font-size: 14.5px; line-height: 20px; letter-spacing: -0.4px; }
.kpi svg { margin: -1px; height: 84px; }
.kpi svg text { font-family: Roboto, sans-serif; font-size: 49px; }
.k1 { width: 203px; background: #55ba7a; color: #a4e3ba; } .k1 text { fill: #2f7446; font-weight: 400; }
.k2 { width: 173px; background: #2f7447; color: #58cc82; box-shadow: inset 12px 0 14px -8px #123c20; } .k2 text { fill: #55ba7a; font-weight: 700; }
.k3 { width: 220px; background: #0e421f; color: #257a41; box-shadow: inset 12px 0 14px -8px #04200c; } .k3 text { fill: #1aab4b; font-weight: 700; }
.k3 svg { height: 85px; }
.vh { font-family: "Liberation Sans", Arial, sans-serif; font-weight: 700; font-size: 17px; white-space: nowrap; padding-left: 4px; letter-spacing: 1.22px; -webkit-text-stroke: .9px currentColor; }
.vh u { text-decoration-thickness: 1.5px; text-underline-offset: 2px; text-decoration-skip-ink: none; }
.v-line { height: 280px; border: 1px solid #4a3530; background: #f4c4af; }
.v-line .vh { height: 34px; background: #ec8b60; color: #73361b; border-bottom: 1px solid #4d5f86; line-height: 26px; }
.row3 { display: flex; height: 261px; }
.row3 .vh { height: 29px; line-height: 26px; }
.v-pie { width: 571px; border: 1px solid #b44d8f; background: #ed90cb; }
.v-pie .vh { background: #a465ae; color: #3a0046; border-bottom: 1px solid #d9a93c; }
.v-region { width: 363px; border: 1px solid #d36a74; background: #efb4b8; box-shadow: inset 16px 0 14px -8px #d9939f; }
.v-region .vh { background: #de6973; color: #6b2026; box-shadow: inset 14px 0 12px -8px #c84f66; }
.v-slicer { width: 232px; border: 1px solid #333; background: #b3b3b3; }
.v-slicer .vh { background: #808080; color: #222; }
.sl-head { display: flex; align-items: center; padding: 0 11px 0 11px; height: 16px; justify-content: space-between; font-family: Roboto, sans-serif; font-size: 12.500px; letter-spacing: 0.25px; }
.sl-head svg { margin-top: -3px; }
.sl-row { display: flex; align-items: center; height: 26.400px; padding-left: 11px; font-size: 14.500px; gap: 7px; color: #333; }
.sl-row svg { margin-top: -4px; }
.sq { width: 15px; height: 15px; border: 1.3px solid #777; margin-top: -2px; }
.sq.full { background: #222; border-color: #222; }
.ch { fill: none; stroke: #777; stroke-width: 1.2; }
.ax { font-size: 11.500px; fill: #666; }
.ax.cen { fill: #ab3b45; }
.ax.lg { font-size: 12px; }
svg text.at { font-size: 12.500px; fill: #252423; font-family: Roboto, sans-serif; }
.bl { font-size: 11.500px; fill: #fff; }
.b7 { font-weight: 700; }
.blank { flex: 1; }
.pages { height: 45px; background: #f3f2f1; display: flex; }
.pg-mon { margin: 7px 0 0 12px; width: 30px; height: 32px; display: flex; justify-content: center; border-bottom: 3px solid #117865; padding-top: 1px; }
.pg-ph { margin: 6px 0 0 31px; }
.pg-ar { margin: 17px 0 0 25px; }
.pg-tab { margin-left: 7px; width: 95px; background: #fff; border-left: 1px solid #aaa; border-bottom: 5px solid #117865; text-align: center; line-height: 46px; font-size: 14.500px; letter-spacing: -.3px; }
.pg-add { width: 49px; background: #117865; display: flex; align-items: center; justify-content: center; padding-bottom: 3px; }

/* filters */
.filters { width: 251px; flex: none; background: #fff; border-left: 1px solid #b8b6b4; height: 746px; align-self: flex-start; color: #111; }
.f-top { height: 105px; border-bottom: 1px solid #b8b6b4; padding: 10px 13px 0 14px; }
.f-head { display: flex; align-items: center; height: 30px; }
.filters h2, .p-head h2 { font-size: 18px; font-weight: 600; letter-spacing: -.4px; }
.f-head h2 { margin: 0 auto 0 9px; }
.f-head .dbl { margin: -2px -1px 0 20px; }
.dbl { fill: none; stroke: #222; stroke-width: 1.700; }
.f-search { margin: 17px 2px 0 -4px; width: 225px; height: 42px; border: 1px solid #a19f9d; border-radius: 2px; display: flex; align-items: center; padding: 1px 0 0 13px; gap: 11px; font-size: 15.500px; }
.f-sec { padding: 21px 9px 0 10px; height: 122px; }
.f-lab { display: flex; justify-content: space-between; padding-right: 4px; line-height: 20px; white-space: nowrap; letter-spacing: -.3px; }
.f-lab b { letter-spacing: 2px; font-weight: 400; }
.f-box { margin-top: 11px; width: 230px; height: 57px; border: 1px solid #c8c6c4; border-radius: 2px; text-align: center; line-height: 57px; letter-spacing: -.25px; }

/* visualizations */
.viz { width: 226px; flex: none; border-left: 1px solid #dcdad8; }
.p-head { display: flex; justify-content: space-between; align-items: center; height: 30px; margin: 10px 9px 0 10px; }
.p-head h2 { letter-spacing: -.35px; }
.bv { margin: 8px 0 0 10px; line-height: 20px; letter-spacing: 0; -webkit-text-stroke: .25px; }
.modes { display: flex; margin: 4px 0 0 10px; gap: 44px; }
.mode { width: 40px; height: 40px; display: flex; align-items: center; justify-content: center; }
.mode.on { background: #d2d0ce; border-radius: 2px; }
.caret { margin-top: 5px; }
.vgrid { display: grid; grid-template-columns: repeat(6, 35px); grid-auto-rows: 35px; padding: 14px 0 0 14px; height: 257px; }
.vgrid svg { width: 23.500px; height: 23.500px; overflow: visible; }
.k { fill: none; stroke: #3b3a39; stroke-width: 1.600; }
.kg { fill: none; stroke: #8a8886; stroke-width: 1.200; }
.w { fill: #fff; stroke: #605e5c; stroke-width: 1.300; }
.w2 { fill: #fff; stroke: #3b3a39; stroke-width: 1.600; }
.b { fill: #83beec; stroke: #1568ae; stroke-width: 1.300; }
.g, .gs { fill: #c8c6c4; stroke: #797775; stroke-width: 1.300; }
.gd { fill: #a19f9d; stroke: #797775; }
.o { fill: #f3a64c; stroke: #d8680a; stroke-width: 1.200; }
.bolt { fill: #fbc968; stroke: #d8680a; stroke-width: 1.200; }
.vdots { height: 36px; padding-left: 15px; font-size: 22px; line-height: 6px; letter-spacing: 1.500px; border-bottom: 1px solid #dcdad8; }
.wells { padding: 12px 6px 0 5px; }
.w-lab { padding-left: 10px; line-height: 20px; }
.well { margin: 6px 0 0; height: 35px; width: 214px; border: 1px dashed #c8c6c4; border-radius: 2px; background: #fff; line-height: 34px; padding-left: 13px; letter-spacing: -.12px; white-space: nowrap; }
.w-dt { margin: 13px 0 5px 10px; line-height: 20px; color: #484644; -webkit-text-stroke: .25px; letter-spacing: -.1px; }
.w-row { display: flex; justify-content: space-between; align-items: center; height: 34px; padding: 0 21px 0 10px; letter-spacing: -.2px; }
.w-row span { margin-top: -3px; }
.tog { width: 40px; height: 20px; border-radius: 10px; background: #117865; color: #fff; font-size: 12px; line-height: 19px; padding: 0 6px; display: flex; align-items: center; justify-content: space-between; }
.tog i { width: 10px; height: 10px; border-radius: 50%; background: #fff; }
.w2l { height: 32px; line-height: 31px; padding-left: 10px; margin-top: 5px; }

/* data */
.data { width: 226px; flex: none; border-left: 1px solid #dcdad8; }
.data .p-head { margin-left: 10px; margin-right: 9px; }
.d-search { margin: 17px 0 0 5px; width: 214px; height: 30px; background: #fff; border: 1px solid #d1d1d1; border-bottom-color: #616161; border-radius: 4px; display: flex; align-items: center; padding: 1px 0 0 14px; gap: 8px; font-size: 16.500px; color: #707070; }
.d-body { display: flex; }
.tree { width: 210px; flex: none; }
.d-table { display: flex; align-items: center; height: 31px; padding-left: 16px; gap: 5px; white-space: nowrap; }
.d-table span { margin-left: 2px; letter-spacing: -.3px; }
.field { display: grid; grid-template-columns: 15px 21px 1fr; column-gap: 6px; height: 30px; align-items: center; padding-left: 55px; white-space: nowrap; }
.field i { width: 15px; height: 15px; border: 1px solid #777; border-radius: 2px; background: #faf9f8; }
.field svg { margin-left: 5px; overflow: visible; }
.field span:last-child { letter-spacing: -.3px; }
.d-scroll { width: 10px; height: 673px; background: #8a8886; margin-top: 20px; }

/* status bar */
.status { height: 30px; flex: none; border-top: 1px solid #dcdad8; border-bottom: 1px solid #000; display: flex; justify-content: space-between; align-items: center; color: #444; padding: 1px 22px 0 5px; }
.st-page { letter-spacing: -.15px; }
.zoom { display: flex; align-items: center; gap: 19px; }
.zoom span { width: 34px; color: #666; } .zoom svg:first-child { overflow: visible; }

/* taskbar */
.taskbar { height: 60px; flex: none; background: #20201f; border-top: 1px solid #4a4a4a; color: #fff; display: flex; }
.weather { width: 352px; padding: 8px 0 0 25px; display: flex; }
.weather div { display: flex; flex-direction: column; line-height: 20px; font-size: 14.5px; padding-left: 1px; letter-spacing: -.5px; }
.weather .wd { color: #d0d0d0; letter-spacing: 0; }
.start { margin-top: 16px; }
.t-search { width: 275px; height: 40px; margin: 10px 0 0 17px; border-radius: 20px; background: #3d3d3c; border: 1px solid #555; display: flex; align-items: center; padding: 0 8px 0 13px; gap: 12px; font-size: 16px; color: #ddd; letter-spacing: 0; }
.gate { margin-left: auto; }
.apps { display: flex; margin-left: 2px; padding-top: 5px; }
.apps div { width: 55px; height: 50px; display: flex; align-items: center; justify-content: center; position: relative; }
.apps .run::after, .pbi::after { content: ""; position: absolute; bottom: 0; width: 8px; height: 4px; border-radius: 2px; background: #999; }
.apps .pbi { background: #343433; width: 49px; margin: 0 3px; border-radius: 5px; }
.apps .pbi::after { width: 20px; background: #6fcfdc; }
.tray { flex: 1; display: flex; align-items: center; padding: 0 24px 0 0; justify-content: flex-end; font-size: 14.5px; line-height: 20px; }
.tray span { display: block; }
.cl { margin: 0 23px 0 22px; }
.lang { width: 32px; text-align: center; margin-right: 21px; }
.vo { margin: 0 10px; }
.ba { margin-right: 8px; }
.clock { text-align: right; width: 88px; letter-spacing: 0; }
```

FILE: app.js
```js
const NS = "http://www.w3.org/2000/svg";
function add(parent, tag, attrs, text) {
  const e = document.createElementNS(NS, tag);
  for (const k in attrs) e.setAttribute(k, attrs[k]);
  if (text) e.textContent = text;
  parent.appendChild(e);
  return e;
}
const fit = w => ({ textLength: w, lengthAdjust: "spacingAndGlyphs" });

// line chart
const line = document.getElementById("line");
const labels = ("1/1/2017 1/12/2017 1/13/2017 1/14/2017 1/15/2017 1/16/2017 1/17/2015 1/19/2015 1/19/2017 1/2/2017 1/20/2014 1/20/2017 " +
  "1/21/2017 1/22/2017 1/23/2014 1/23/2017 1/26/2014 1/26/2017 1/28/2017 1/29/2017 1/3/2014 1/3/2015 1/3/2016 1/30/2014 1/30/2015 1/30/2016 " +
  "1/30/2017 1/31/2015 1/31/2016 1/4/2014 1/4/2015 1/7/2014 1/7/2016 1/7/2017 1/8/2016 1/9/2014 10/1/2015 10/1/2016 10/1/2017 10/10/2... 10/10/2... " +
  "10/10/2... 10/10/2... 10/11/2... 10/12/2... 10/12/2... 10/12/2... 10/13/2... 10/13/2... 10/14/2... 10/14/2... 10/14/2... 10/15/2... 10/15/2... " +
  "10/17/2... 10/17/2... 10/18/2...").split(" ");
const orders = [8,1,4,8,4,3,1,2,1,4,8,1,6,2,1,1,2,1,1,5,1,4,5,2,1,4,10,3,1,3,2,2,2,1,2,2,2,4,2,4,1,2,1,2,1,3,5,5,3,5,1,2,8,6,3,2,2];
const sales = [1,.8,4.7,.3,.15,5.9,.25,.3,.02,1.4,.7,.02,1.6,.05,.02,.2,.15,.05,.3,.15,.02,1.8,2,.2,.03,2.3,2.5,.1,.05,.3,.1,.1,.1,3.1,1.7,.05,.1,.25,.1,1.5,.05,.05,.2,.05,.05,.4,1.5,.3,.15,2.4,1.8,.05,3.3,1,.15,2.4,.05];
const px = i => 118 + i * 18.54, py = v => 508.5 - v * 5.71;
[394.5, 451.5, 508.5].forEach((y, i) => {
  add(line, "path", { d: `M102 ${y}H1171`, stroke: "#c9bdb6", "stroke-dasharray": "1 5" });
  add(line, "text", { class: "ax", x: 94, y: y + 3.5, "text-anchor": "end", ...fit(i == 2 ? 12 : 18) }, ["20K", "10K", "0K"][i]);
  add(line, "text", { class: "ax", x: 1180, y: y + 3.5, ...fit(i == 2 ? 6 : 12) }, ["20", "10", "0"][i]);
});
[[sales, "#118dff"], [orders, "#12239e"]].forEach(([s, c]) =>
  add(line, "polyline", { points: s.map((v, i) => px(i) + "," + py(v)).join(" "), fill: "none", stroke: c, "stroke-width": 2.8, "stroke-linejoin": "round" }));
labels.forEach((t, i) => {
  const w = t.includes("...") ? 44 : t.length == 8 ? 42 : 48;
  add(line, "text", { class: "ax lg", transform: `translate(${px(i) + 4} 514.5) rotate(-90)`, "text-anchor": "end", ...fit(w) }, t);
});
add(line, "circle", { cx: 61.5, cy: 372.5, r: 4.7, fill: "#118dff" });
add(line, "circle", { cx: 146.5, cy: 372.5, r: 4.7, fill: "#12239e" });
add(line, "text", { class: "ax", x: 68, y: 377, ...fit(69) }, "Sum of Sales");
add(line, "text", { class: "ax", x: 153, y: 377, ...fit(110) }, "Count of Order Date");
add(line, "text", { class: "at", x: 602, y: 583, ...fit(70) }, "month-year");
add(line, "text", { class: "at", transform: "translate(68 489) rotate(-90)", ...fit(76) }, "Sum of Sales");
add(line, "text", { class: "at", transform: "translate(1209 509) rotate(-90)", ...fit(116) }, "Count of Order Date");
add(line, "rect", { x: 102, y: 586, width: 1068, height: 7, rx: 3.5, fill: "#e9d2c8" });
add(line, "rect", { x: 104, y: 587, width: 83, height: 6, rx: 3, fill: "#b3a19a" });

// donut chart
const donut = document.getElementById("donut");
const CX = 285.8, CY = 740.7, R = 85.6, r = 51.2;
const pt = (p, q) => [CX + q * Math.sin(p * Math.PI / 50), CY - q * Math.cos(p * Math.PI / 50)].map(n => n.toFixed(2)).join(" ");
const arc = (a, b, c) => add(donut, "path", { fill: c, d: `M${pt(a, R)}A${R} ${R} 0 0 1 ${pt(b, R)}L${pt(b, r)}A${r} ${r} 0 0 0 ${pt(a, r)}Z` });
arc(0, 34, "#118dff");
arc(34, 67.3, "#e66c37");
arc(67.3, 100, "#12239e");
[6.77, 14.2, 19.55, 38.7, 39.8, 51.15, 52.1, 52.4, 52.9, 56.2, 65.4, 72.1, 89.1, 92.2].forEach(p =>
  add(donut, "path", { d: `M${pt(p, r)}L${pt(p, R)}`, stroke: "#f7e3ef", "stroke-width": 1.3 }));
[
  ["33.96K (6.77%)", 320, 647, 71, "M304 655l2-9h11"],
  ["37.26K (7.43%)", 359, 665, 70, "M339 671l6-7h11"],
  ["26.8K (5.35%)", 384, 694, 65, "M362 698l7-5h12"],
  ["72.4K (14.44%)", 396, 752, 70, "M373 750l8 1h11"],
  ["23.58K (4.7%)", 373, 804, 65, "M352 798l6 5h11"],
  ["56.92K (11.36%)", 327, 834, 76, "M310 824l2 9h11"],
  ["39.15K (7.81%)", 188, 646, 71, "M275 653l-1-8h-11"],
  ["15.25K (3.04%)", 147, 661, 70, "M237 667l-4-7h-11"],
  ["85.23K (17%)", 118, 708, 63, "M203 710l-8-3h-11"],
  ["24.16K (4.82%)", 109, 772, 71, "M203 769l-8 3h-11"],
  ["9.47K (1.89%)", 124, 791, 65, "M211 786l-7 5h-11"],
  ["45.93K (9.16%)", 139, 816, 71, "M231 809l-6 6h-11"],
  ["4.64K (0.93%)", 196, 837, 65, "M277 827l-1 9h-11"]
].forEach(([t, x, y, w, d]) => {
  add(donut, "path", { d, fill: "none", stroke: "#b5739c" });
  add(donut, "text", { class: "ax", x, y: y + 4, ...fit(w) }, t);
});
add(donut, "text", { class: "ax lg", x: 515.5, y: 711, "font-weight": 600, ...fit(52) }, "Category");
[["Technology", "#118dff", 726, 61], ["Office Supplies", "#e66c37", 748.5, 80], ["Furniture", "#12239e", 771.5, 48]].forEach(([t, c, y, w]) => {
  add(donut, "circle", { cx: 520.5, cy: y, r: 4.6, fill: c });
  add(donut, "text", { class: "ax lg", x: 528, y: y + 5, ...fit(w) }, t);
});

// data field list
const sigma = '<svg width="14" height="16" viewBox="0 0 14 16" fill="none" stroke="#444" stroke-width="1.500"><path d="M13.500 1H1l6.500 7L1 15h12.500"/></svg>';
const calc = '<svg width="18" height="18" viewBox="0 0 18 18" fill="none" stroke="#333" stroke-width="1.400"><path d="M4 14.500H3A2 2 0 0 1 1 12.500V3a2 2 0 0 1 2-2h10a2 2 0 0 1 2 2v3M1 5h4M5 1v13M9 1v4M9 4h6"/><text x="5.500" y="15" font-size="14" font-style="italic" font-weight="700" fill="#333">f</text><path d="M12 11l5 6M17 11l-5 6"/></svg>';
document.getElementById("fields").innerHTML = ["Category", "City", "*Column", "Country", "Customer ID", "Customer Na...", "+Discount", "Order Date", "Order ID",
  "+Postal Code", "Product ID", "Product Name", "+Profit", "+Quantity", "Region", "+Row ID", "+Sales", "Segment", "Ship Date", "Ship Mode", "State", "Sub-Category"]
  .map(f => `<div class="field"><i></i><span>${f[0] == "+" ? sigma : f[0] == "*" ? calc : ""}</span><span>${f.replace(/^[+*]/, "")}</span></div>`).join("");
```
